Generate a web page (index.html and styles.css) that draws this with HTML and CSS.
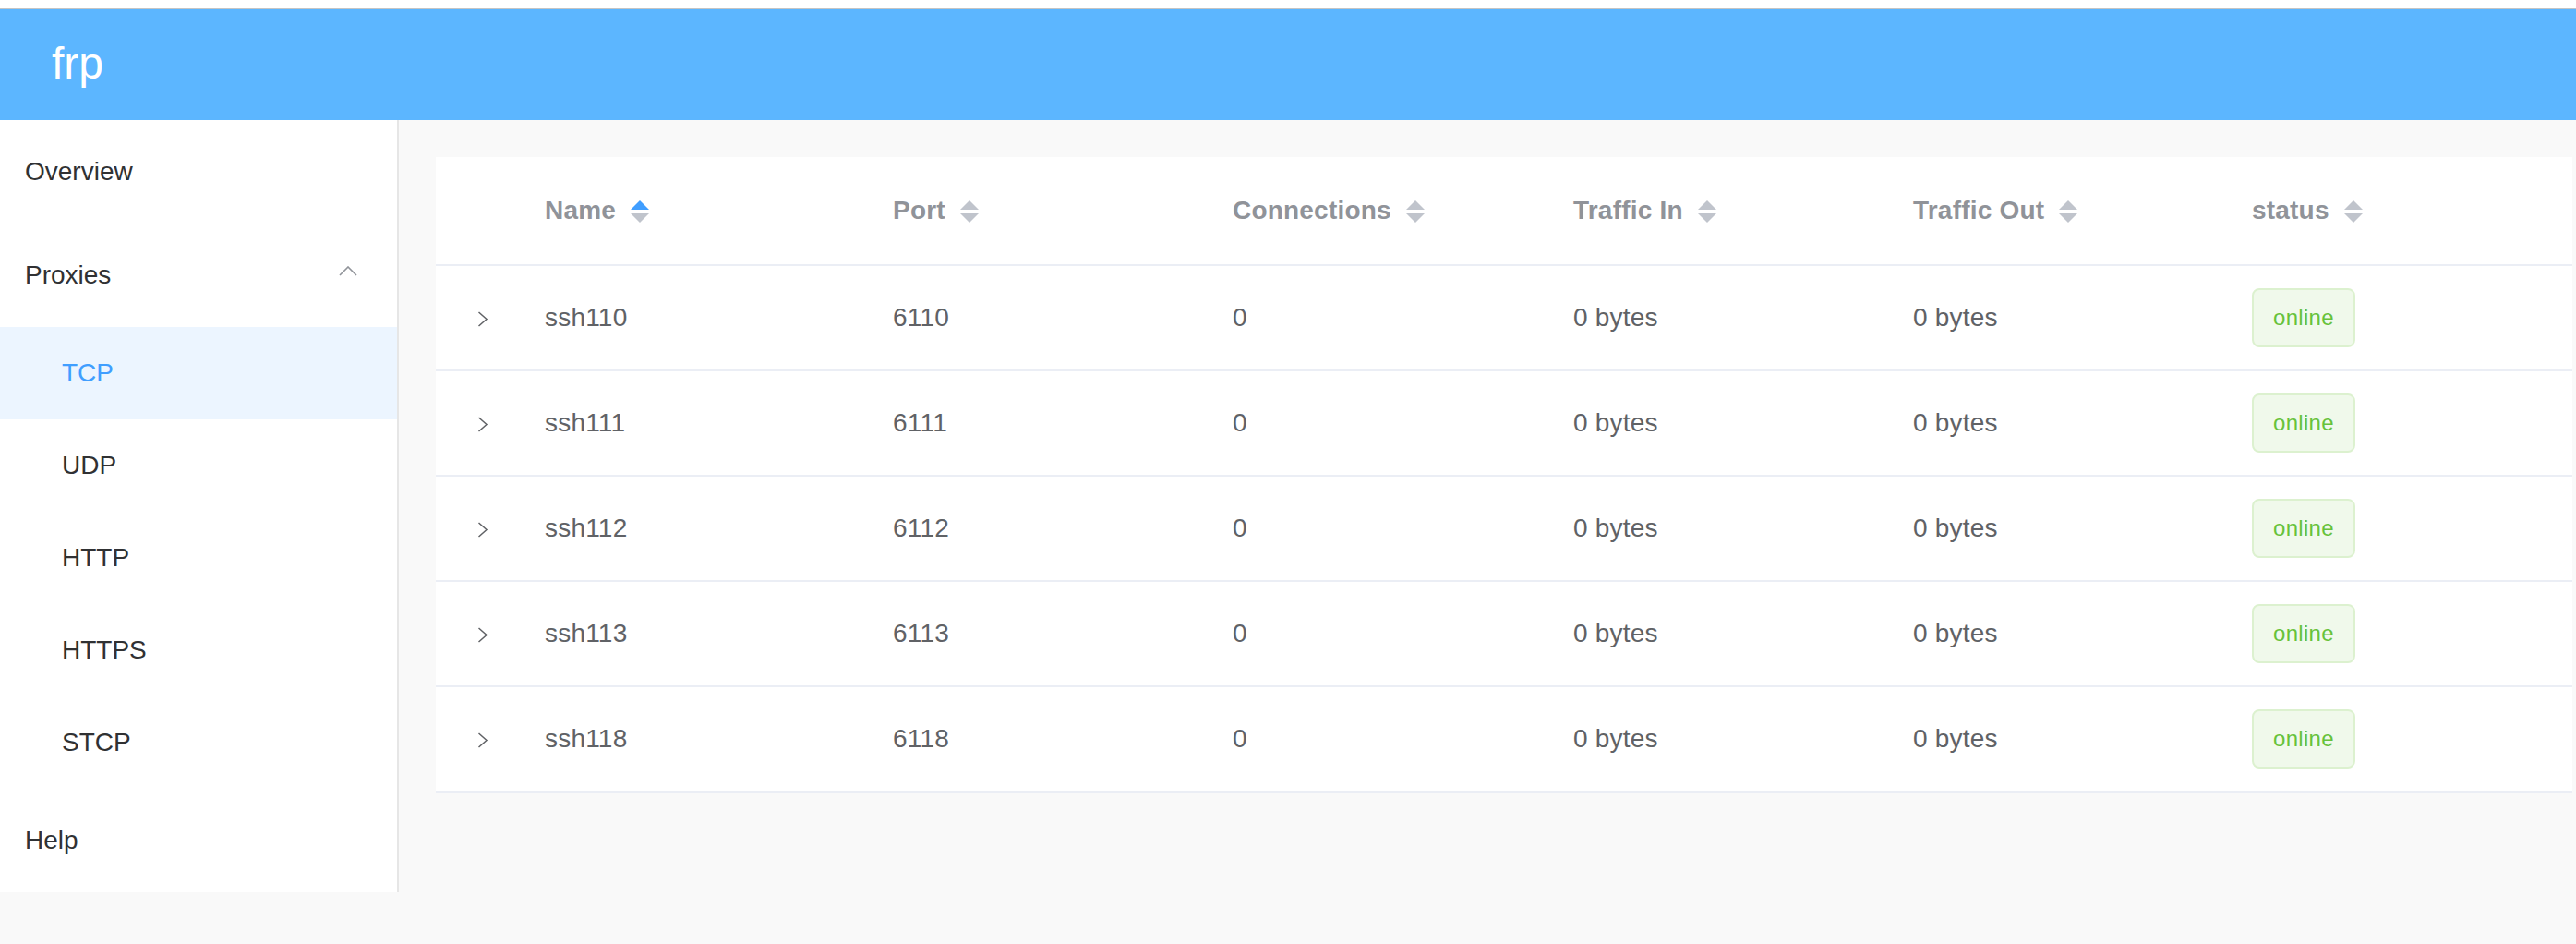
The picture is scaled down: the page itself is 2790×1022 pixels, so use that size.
FILE: index.html
```html
<!DOCTYPE html>
<html lang="en">
<head>
<meta charset="utf-8">
<title>frp</title>
<link rel="stylesheet" href="styles.css">
</head>
<body>
<div class="topstrip"></div>
<header class="brand-bar"><span class="brand">frp</span></header>
<div class="layout">
  <aside class="sidebar">
    <div class="menu-item">Overview</div>
    <div class="menu-item submenu-title">
      <span>Proxies</span>
      <svg class="submenu-arrow" width="20" height="11" viewBox="0 0 20 11"><polyline points="1,10 10,1 19,10" fill="none" stroke="#909399" stroke-width="1.6"/></svg>
    </div>
    <div class="sub-item active">TCP</div>
    <div class="sub-item">UDP</div>
    <div class="sub-item">HTTP</div>
    <div class="sub-item">HTTPS</div>
    <div class="sub-item">STCP</div>
    <div class="menu-item">Help</div>
  </aside>
  <main class="content">
    <div class="card">
      <table class="proxy-table">
        <colgroup>
          <col class="c-expand"><col class="c-name"><col class="c-port"><col class="c-conn"><col class="c-in"><col class="c-out"><col class="c-status">
        </colgroup>
        <thead>
          <tr>
            <th></th>
            <th><span class="th-inner">Name<svg class="sort" width="20" height="24" viewBox="0 0 20 24"><polygon points="0,10 10,0 20,10" fill="#409eff"/><polygon points="0,14 20,14 10,24" fill="#c0c4cc"/></svg></span></th>
            <th><span class="th-inner">Port<svg class="sort" width="20" height="24" viewBox="0 0 20 24"><polygon points="0,10 10,0 20,10" fill="#c0c4cc"/><polygon points="0,14 20,14 10,24" fill="#c0c4cc"/></svg></span></th>
            <th><span class="th-inner">Connections<svg class="sort" width="20" height="24" viewBox="0 0 20 24"><polygon points="0,10 10,0 20,10" fill="#c0c4cc"/><polygon points="0,14 20,14 10,24" fill="#c0c4cc"/></svg></span></th>
            <th><span class="th-inner">Traffic In<svg class="sort" width="20" height="24" viewBox="0 0 20 24"><polygon points="0,10 10,0 20,10" fill="#c0c4cc"/><polygon points="0,14 20,14 10,24" fill="#c0c4cc"/></svg></span></th>
            <th><span class="th-inner">Traffic Out<svg class="sort" width="20" height="24" viewBox="0 0 20 24"><polygon points="0,10 10,0 20,10" fill="#c0c4cc"/><polygon points="0,14 20,14 10,24" fill="#c0c4cc"/></svg></span></th>
            <th><span class="th-inner">status<svg class="sort" width="20" height="24" viewBox="0 0 20 24"><polygon points="0,10 10,0 20,10" fill="#c0c4cc"/><polygon points="0,14 20,14 10,24" fill="#c0c4cc"/></svg></span></th>
          </tr>
        </thead>
        <tbody>
          <tr>
            <td class="expand"><svg width="12" height="17" viewBox="0 0 12 17"><polyline points="1.5,1 10,8.5 1.5,16" fill="none" stroke="#606266" stroke-width="1.5"/></svg></td>
            <td>ssh110</td><td>6110</td><td>0</td><td>0 bytes</td><td>0 bytes</td><td><span class="tag">online</span></td>
          </tr>
          <tr>
            <td class="expand"><svg width="12" height="17" viewBox="0 0 12 17"><polyline points="1.5,1 10,8.5 1.5,16" fill="none" stroke="#606266" stroke-width="1.5"/></svg></td>
            <td>ssh111</td><td>6111</td><td>0</td><td>0 bytes</td><td>0 bytes</td><td><span class="tag">online</span></td>
          </tr>
          <tr>
            <td class="expand"><svg width="12" height="17" viewBox="0 0 12 17"><polyline points="1.5,1 10,8.5 1.5,16" fill="none" stroke="#606266" stroke-width="1.5"/></svg></td>
            <td>ssh112</td><td>6112</td><td>0</td><td>0 bytes</td><td>0 bytes</td><td><span class="tag">online</span></td>
          </tr>
          <tr>
            <td class="expand"><svg width="12" height="17" viewBox="0 0 12 17"><polyline points="1.5,1 10,8.5 1.5,16" fill="none" stroke="#606266" stroke-width="1.5"/></svg></td>
            <td>ssh113</td><td>6113</td><td>0</td><td>0 bytes</td><td>0 bytes</td><td><span class="tag">online</span></td>
          </tr>
          <tr>
            <td class="expand"><svg width="12" height="17" viewBox="0 0 12 17"><polyline points="1.5,1 10,8.5 1.5,16" fill="none" stroke="#606266" stroke-width="1.5"/></svg></td>
            <td>ssh118</td><td>6118</td><td>0</td><td>0 bytes</td><td>0 bytes</td><td><span class="tag">online</span></td>
          </tr>
        </tbody>
      </table>
    </div>
  </main>
</div>
</body>
</html>
```
FILE: styles.css
```css
html, body {
  margin: 0;
  padding: 0;
}
body {
  background: #f9f9f9;
  font-family: "Liberation Sans", Arial, sans-serif;
  min-height: 1022px;
}
.topstrip {
  height: 9px;
  background: #ffffff;
  border-bottom: 1px solid #c4c4c4;
}
.brand-bar {
  height: 120px;
  background: #5cb6ff;
  display: flex;
  align-items: center;
  padding-left: 56px;
}
.brand {
  color: #ffffff;
  font-size: 48px;
  line-height: 1;
  padding-bottom: 2px;
}
.layout {
  display: flex;
  align-items: flex-start;
}
.sidebar {
  width: 430px;
  flex: 0 0 430px;
  background: #ffffff;
  border-right: 2px solid #e6e6e6;
}
.menu-item {
  height: 112px;
  line-height: 112px;
  padding-left: 27px;
  font-size: 28px;
  color: #303133;
}
.submenu-title {
  display: flex;
  align-items: center;
  justify-content: space-between;
  padding-right: 43px;
}
.submenu-arrow {
  display: block;
  margin-top: -10px;
}
.sub-item {
  height: 100px;
  line-height: 100px;
  padding-left: 67px;
  font-size: 28px;
  color: #303133;
}
.sub-item.active {
  background: #ecf5ff;
  color: #409eff;
}
.content {
  flex: 1;
  padding: 40px 4px 0 40px;
}
.card {
  background: #ffffff;
}
.proxy-table {
  width: 100%;
  border-collapse: collapse;
  table-layout: fixed;
  font-size: 28px;
  letter-spacing: 0.2px;
}
.c-expand { width: 98px; }
.c-name { width: 377px; }
.c-port { width: 368px; }
.c-conn { width: 369px; }
.c-in { width: 368px; }
.c-out { width: 367px; }
.proxy-table th {
  height: 116px;
  padding: 0 0 0 20px;
  text-align: left;
  font-weight: bold;
  color: #909399;
  border-bottom: 2px solid #ebeef5;
  vertical-align: middle;
}
.proxy-table th:first-child {
  padding: 0;
}
.th-inner {
  display: inline-flex;
  align-items: center;
  margin-top: -6px;
}
.sort {
  display: block;
  margin-left: 16px;
  margin-top: 2px;
}
.proxy-table td {
  height: 112px;
  padding: 0 0 0 20px;
  color: #606266;
  border-bottom: 2px solid #ebeef5;
  vertical-align: middle;
}
.proxy-table td.expand {
  padding: 0;
  text-align: center;
}
.proxy-table td.expand svg {
  display: inline-block;
  vertical-align: middle;
  margin-left: 4px;
}
.tag {
  display: inline-block;
  box-sizing: border-box;
  height: 64px;
  line-height: 60px;
  padding: 0 21px;
  font-size: 24px;
  color: #67c23a;
  background: #f0f9eb;
  border: 2px solid #dcf1cf;
  border-radius: 8px;
  letter-spacing: 0.3px;
}
```
